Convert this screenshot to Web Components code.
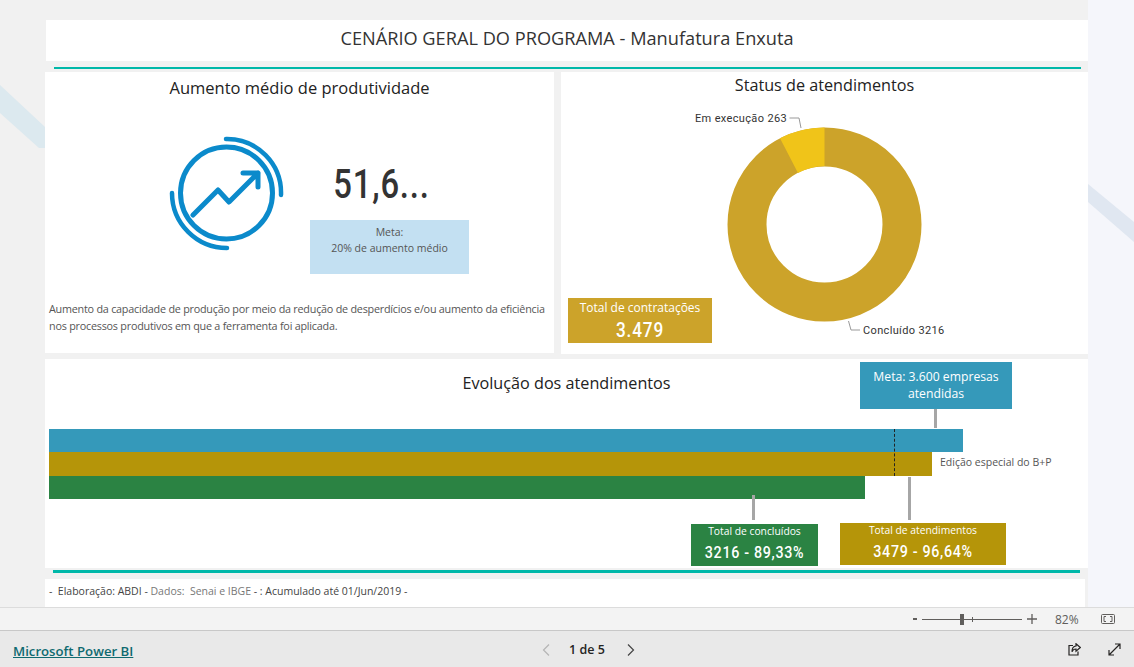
<!DOCTYPE html>
<html lang="pt-BR">
<head>
<meta charset="utf-8">
<title>Manufatura Enxuta</title>
<style>
    html, body { margin: 0; height: 100%; overflow: hidden; }
    body { font-family: "Open Sans", "Noto Sans", sans-serif; background: #f1f1f1; }
</style>
</head>
<body>
<report-viewer>
    <report-canvas>
        <report-header>CENÁRIO GERAL DO PROGRAMA - Manufatura Enxuta</report-header>
        <teal-rule></teal-rule>
        <div style="display:flex;gap:7px;margin-top:3px;align-items:flex-start">
            <kpi-panel></kpi-panel>
            <status-panel></status-panel>
        </div>
        <evolution-panel></evolution-panel>
        <teal-rule class="lower"></teal-rule>
        <source-note></source-note>
    </report-canvas>
    <zoom-bar></zoom-bar>
    <viewer-footer></viewer-footer>
</report-viewer>

<script>
// no DIN on the machine: Roboto squeezed horizontally is the closest shape
const DIN = '"Roboto", sans-serif';

class ReportViewer extends HTMLElement {
    constructor() {
        super();
        this.attachShadow({ mode: 'open' });
    }

    connectedCallback() {
        this.shadowRoot.innerHTML = `
            <style>
                :host { display: flex; flex-direction: column; width: 1134px; height: 667px; }
            </style>
            <slot></slot>
        `;
    }
}

class ReportCanvas extends HTMLElement {
    constructor() {
        super();
        this.attachShadow({ mode: 'open' });
    }

    connectedCallback() {
        this.shadowRoot.innerHTML = `
            <style>
                :host {
                    display: block;
                    position: relative;
                    height: 607px;
                    background: #f1f1f1;
                    overflow: hidden;
                }
                .page { position: relative; width: 1043px; margin-left: 45px; padding-top: 20px; }
                .strip { position: absolute; left: 1088px; top: 0; width: 46px; height: 607px; background: #f5f6fb; }
                svg { position: absolute; left: 0; top: 0; }
            </style>
            <div class="strip"></div>
            <svg width="1134" height="607">
                <polygon points="0,85 45,127 45,148 39,148 0,113" fill="#dce9ef"/>
                <polygon points="1088,184 1134,222 1134,242 1088,202" fill="#e0e7f1"/>
            </svg>
            <div class="page"><slot></slot></div>
        `;
    }
}

class ReportHeader extends HTMLElement {
    constructor() {
        super();
        this.attachShadow({ mode: 'open' });
    }

    connectedCallback() {
        this.shadowRoot.innerHTML = `
            <style>
                :host {
                    display: block;
                    height: 41px;
                    margin-left: 1px;
                    background: #fff;
                    color: #333;
                    font-size: 18.2px;
                    line-height: 36px;
                    text-align: center;
                }
            </style>
            <slot></slot>
        `;
    }
}

class TealRule extends HTMLElement {
    constructor() {
        super();
        this.attachShadow({ mode: 'open' });
    }

    connectedCallback() {
        this.shadowRoot.innerHTML = `
            <style>
                :host {
                    display: block;
                    height: 2px;
                    width: 1027px;
                    margin: 6px 0 0 9px;
                    background: #00b8a9;
                }
                :host(.lower) { height: 3px; margin: 2px 0 0 8px; }
            </style>
        `;
    }
}

class KpiPanel extends HTMLElement {
    constructor() {
        super();
        this.attachShadow({ mode: 'open' });
    }

    connectedCallback() {
        this.shadowRoot.innerHTML = `
            <style>
                :host { display: block; width: 509px; height: 281px; background: #fff; flex: none; }
                h2 { margin: 0; height: 32px; font-size: 16.5px; font-weight: 400; line-height: 32px; text-align: center; color: #222; }
                .row { display: flex; gap: 22px; margin: 28px 0 0 123px; }
                svg { display: block; flex: none; }
                .side { width: 159px; padding-top: 28px; }
                .value {
                    width: 143px;
                    height: 48px;
                    margin-bottom: 12px;
                    font-family: ${DIN};
                    font-size: 40px;
                    font-weight: 500;
                    line-height: 50px;
                    letter-spacing: 1px;
                    text-align: center;
                    color: #333;
                    transform: scaleX(.82);
                }
                .goal {
                    height: 54px;
                    box-sizing: border-box;
                    padding-top: 4px;
                    background: #c3e0f2;
                    color: #555;
                    font-size: 10.5px;
                    line-height: 16px;
                    text-align: center;
                }
                p { margin: 26px 0 0 4px; width: 502px; font-size: 10.8px; letter-spacing: -.23px; line-height: 17px; color: #555; }
            </style>
            <h2>Aumento médio de produtividade</h2>
            <div class="row">
                <svg width="120" height="120" viewBox="168 132 120 120" fill="none" stroke="#0b8acb" stroke-linecap="round" stroke-linejoin="round">
                    <circle cx="226.500" cy="193" r="46" stroke-width="5"/>
                    <path d="M226 139A54 54 0 0 1 281 195" stroke-width="4.500"/>
                    <path d="M172 193A55 55 0 0 0 227 248" stroke-width="4.500"/>
                    <path d="M193 215L218 190L229 202L258 173M243 173H258V187" stroke-width="5"/>
                </svg>
                <div class="side">
                    <div class="value">51,6...</div>
                    <div class="goal">Meta:<br>20% de aumento médio</div>
                </div>
            </div>
            <p>Aumento da capacidade de produção por meio da redução de desperdícios e/ou aumento da eficiência nos processos produtivos em que a ferramenta foi aplicada.</p>
        `;
    }
}

class StatusPanel extends HTMLElement {
    constructor() {
        super();
        this.attachShadow({ mode: 'open' });
    }

    connectedCallback() {
        this.shadowRoot.innerHTML = `
            <style>
                :host { display: flex; flex-direction: column; width: 527px; height: 282px; background: #fff; flex: none; }
                h2 { margin: 0; height: 26px; font-size: 16.2px; font-weight: 400; line-height: 26px; text-align: center; color: #222; }
                .chart { display: grid; flex: 1; }
                .chart > * { grid-area: 1 / 1; }
                svg { display: block; }
                text { font-family: "Roboto", sans-serif; font-size: 11px; letter-spacing: .35px; fill: #333; }
                .total {
                    justify-self: start;
                    align-self: end;
                    width: 144px;
                    height: 45px;
                    margin: 0 0 11px 7px;
                    box-sizing: border-box;
                    padding-top: 1px;
                    background: #cca32a;
                    color: #fff;
                    text-align: center;
                    font-size: 12px;
                    line-height: 18px;
                }
                .total b { display: block; font-family: ${DIN}; font-size: 21px; font-weight: 500; line-height: 27px; letter-spacing: 1px; transform: scaleX(.82); }
            </style>
            <h2>Status de atendimentos</h2>
            <div class="chart">
                <svg width="527" height="256" viewBox="561 98 527 256">
                    <circle cx="824.5" cy="224.5" r="77.5" fill="none" stroke="#cca32a" stroke-width="39"/>
                    <path d="M824.5 127.5A97 97 0 0 0 780 138.3L798 173A58.500 58.500 0 0 1 824.500 166Z" fill="#f0c419"/>
                    <path d="M789.500 118H799L801 128M848.500 321L851 330H860" fill="none" stroke="#999"/>
                    <text x="695" y="122">Em execução 263</text>
                    <text x="863" y="334">Concluído 3216</text>
                </svg>
                <div class="total">Total de contratações<b>3.479</b></div>
            </div>
        `;
    }
}

class EvolutionPanel extends HTMLElement {
    constructor() {
        super();
        this.attachShadow({ mode: 'open' });
    }

    connectedCallback() {
        this.shadowRoot.innerHTML = `
            <style>
                :host { display: block; height: 209px; margin-top: 5px; background: #fff; overflow: hidden; }
                .head { display: grid; padding-top: 3px; }
                .head > * { grid-area: 1 / 1; }
                h2 { margin: 8px 0 0; height: 26px; justify-self: center; font-size: 16.2px; font-weight: 400; line-height: 26px; color: #222; }
                .meta {
                    justify-self: start;
                    width: 152px;
                    height: 47px;
                    margin-left: 815px;
                    box-sizing: border-box;
                    padding-top: 6px;
                    background: #3599ba;
                    color: #fff;
                    font-size: 12.2px;
                    line-height: 17px;
                    text-align: center;
                }
                .stem { width: 3px; height: 19px; margin: 0 0 1px 889px; background: #a6a6a6; }
                .bars { position: relative; margin-left: 4px; }
                .line { display: flex; align-items: center; gap: 8px; }
                .bar { flex: none; }
                .blue { width: 914px; height: 23px; background: #3599ba; }
                .gold { width: 883px; height: 24px; background: #b59509; }
                .green { width: 816px; height: 23px; background: #2b8343; }
                .line span { margin-bottom: 5px; font-size: 10.5px; color: #555; }
                .dash { position: absolute; left: 845px; top: 0; height: 47px; border-left: 1px dashed #222; }
                .boxes { display: flex; align-items: flex-start; margin: 24px 0 0 646px; }
                .box { position: relative; box-sizing: border-box; color: #fff; text-align: center; font-size: 10.3px; line-height: 14px; }
                .box b { display: block; margin-top: 3px; font-family: ${DIN}; font-size: 17px; font-weight: 500; line-height: 22px; letter-spacing: .8px; transform: scaleX(.84); }
                .box i { position: absolute; width: 3px; background: #a6a6a6; }
                .done { width: 127px; height: 42px; margin-top: 1px; background: #2b8343; }
                .done i { left: 61px; bottom: 46px; height: 25px; }
                .all { width: 166px; height: 42px; margin-left: 22px; background: #b59509; }
                .all i { left: 68px; bottom: 45px; height: 43px; }
            </style>
            <div class="head">
                <h2>Evolução dos atendimentos</h2>
                <div class="meta">Meta: 3.600 empresas<br>atendidas</div>
            </div>
            <div class="stem"></div>
            <div class="bars">
                <div class="line"><div class="bar blue"></div></div>
                <div class="line"><div class="bar gold"></div><span>Edição especial do B+P</span></div>
                <div class="line"><div class="bar green"></div></div>
                <div class="dash"></div>
            </div>
            <div class="boxes">
                <div class="box done"><i></i>Total de concluídos<b>3216 - 89,33%</b></div>
                <div class="box all"><i></i>Total de atendimentos<b>3479 - 96,64%</b></div>
            </div>
        `;
    }
}

class SourceNote extends HTMLElement {
    constructor() {
        super();
        this.attachShadow({ mode: 'open' });
    }

    connectedCallback() {
        this.shadowRoot.innerHTML = `
            <style>
                :host {
                    display: block;
                    height: 28px;
                    width: 1040px;
                    margin-top: 6px;
                    box-sizing: border-box;
                    padding-left: 4px;
                    background: #fff;
                    color: #444;
                    font-size: 10.5px;
                    line-height: 24px;
                }
                div { white-space: pre; }
                .soft { color: #777; }
            </style>
            <div>-  Elaboração: ABDI - <span class="soft">Dados:  Senai e IBGE</span> - : Acumulado até 01/Jun/2019 -</div>
        `;
    }
}

class ZoomBar extends HTMLElement {
    constructor() {
        super();
        this.attachShadow({ mode: 'open' });
    }

    connectedCallback() {
        this.shadowRoot.innerHTML = `
            <style>
                :host {
                    display: flex;
                    align-items: center;
                    justify-content: flex-end;
                    height: 23px;
                    box-sizing: border-box;
                    padding-right: 19px;
                    background: #f3f3f3;
                    border-top: 1px solid #dcdcdc;
                    color: #605e5c;
                    font-size: 12px;
                }
                .minus { width: 4px; height: 2px; background: #605e5c; margin-right: 5px; }
                .slider { position: relative; width: 100px; height: 1px; background: #605e5c; }
                .thumb { position: absolute; left: 38px; top: -5px; width: 4px; height: 11px; background: #605e5c; }
                .tick { position: absolute; left: 50px; top: -2px; width: 1px; height: 5px; background: #605e5c; }
                .plus { display: block; margin-left: 5px; }
                .pct { width: 24px; margin: 0 22px 0 18px; white-space: nowrap; }
                svg { display: block; }
            </style>
            <div class="minus"></div>
            <div class="slider"><div class="thumb"></div><div class="tick"></div></div>
            <svg class="plus" width="10" height="10" viewBox="0 0 10 10" stroke="#605e5c" stroke-width="1.3"><path d="M0 5H10M5 0V10"/></svg>
            <span class="pct">82%</span>
            <svg width="14" height="10" viewBox="0 0 14 10" fill="none" stroke="#605e5c"><rect x=".5" y=".5" width="13" height="9" rx="1"/><path d="M5 2.500H3V7.500H5M9 2.500H11V7.500H9"/></svg>
        `;
    }
}

class ViewerFooter extends HTMLElement {
    constructor() {
        super();
        this.attachShadow({ mode: 'open' });
    }

    connectedCallback() {
        this.shadowRoot.innerHTML = `
            <style>
                :host {
                    display: flex;
                    align-items: center;
                    height: 37px;
                    box-sizing: border-box;
                    padding: 1px 0 0 13px;
                    background: #e9e9e9;
                    border-top: 1px solid #c8c8c8;
                    color: #252423;
                }
                a { width: 120px; flex: none; margin-top: 2px; color: #0f6a70; font-size: 13.2px; font-weight: 600; text-decoration: underline; white-space: nowrap; }
                svg { display: block; flex: none; }
                .prev { margin-left: 409px; }
                .page { width: 40px; margin: 0 18px 0 19px; font-size: 12.5px; font-weight: 600; white-space: nowrap; }
                .share { margin-left: 433px; }
                .expand { margin-left: 27px; }
            </style>
            <a href="#">Microsoft Power BI</a>
            <svg class="prev" width="8" height="12" viewBox="0 0 8 12" fill="none" stroke="#b5b5b5" stroke-width="1.2"><path d="M7 .5L1.500 6L7 11.500"/></svg>
            <span class="page">1 de 5</span>
            <svg width="8" height="12" viewBox="0 0 8 12" fill="none" stroke="#444" stroke-width="1.2"><path d="M1 .5L6.500 6L1 11.500"/></svg>
            <svg class="share" width="13" height="13" viewBox="0 0 13 13" fill="none" stroke="#252423" stroke-width="1.200"><path d="M5 2.500H1V12H10V8.500"/><path d="M8 .8L12.300 4.500L8 8.200V6C6 6 4.800 6.800 4 8.800C4 5.500 5.500 3.300 8 3Z"/></svg>
            <svg class="expand" width="13" height="13" viewBox="0 0 13 13" fill="none" stroke="#252423" stroke-width="1.200"><path d="M1 12L12 1M7 1H12V6M1 7V12H6"/></svg>
        `;
    }
}

customElements.define('report-viewer', ReportViewer);
customElements.define('report-canvas', ReportCanvas);
customElements.define('report-header', ReportHeader);
customElements.define('teal-rule', TealRule);
customElements.define('kpi-panel', KpiPanel);
customElements.define('status-panel', StatusPanel);
customElements.define('evolution-panel', EvolutionPanel);
customElements.define('source-note', SourceNote);
customElements.define('zoom-bar', ZoomBar);
customElements.define('viewer-footer', ViewerFooter);
</script>
</body>
</html>
